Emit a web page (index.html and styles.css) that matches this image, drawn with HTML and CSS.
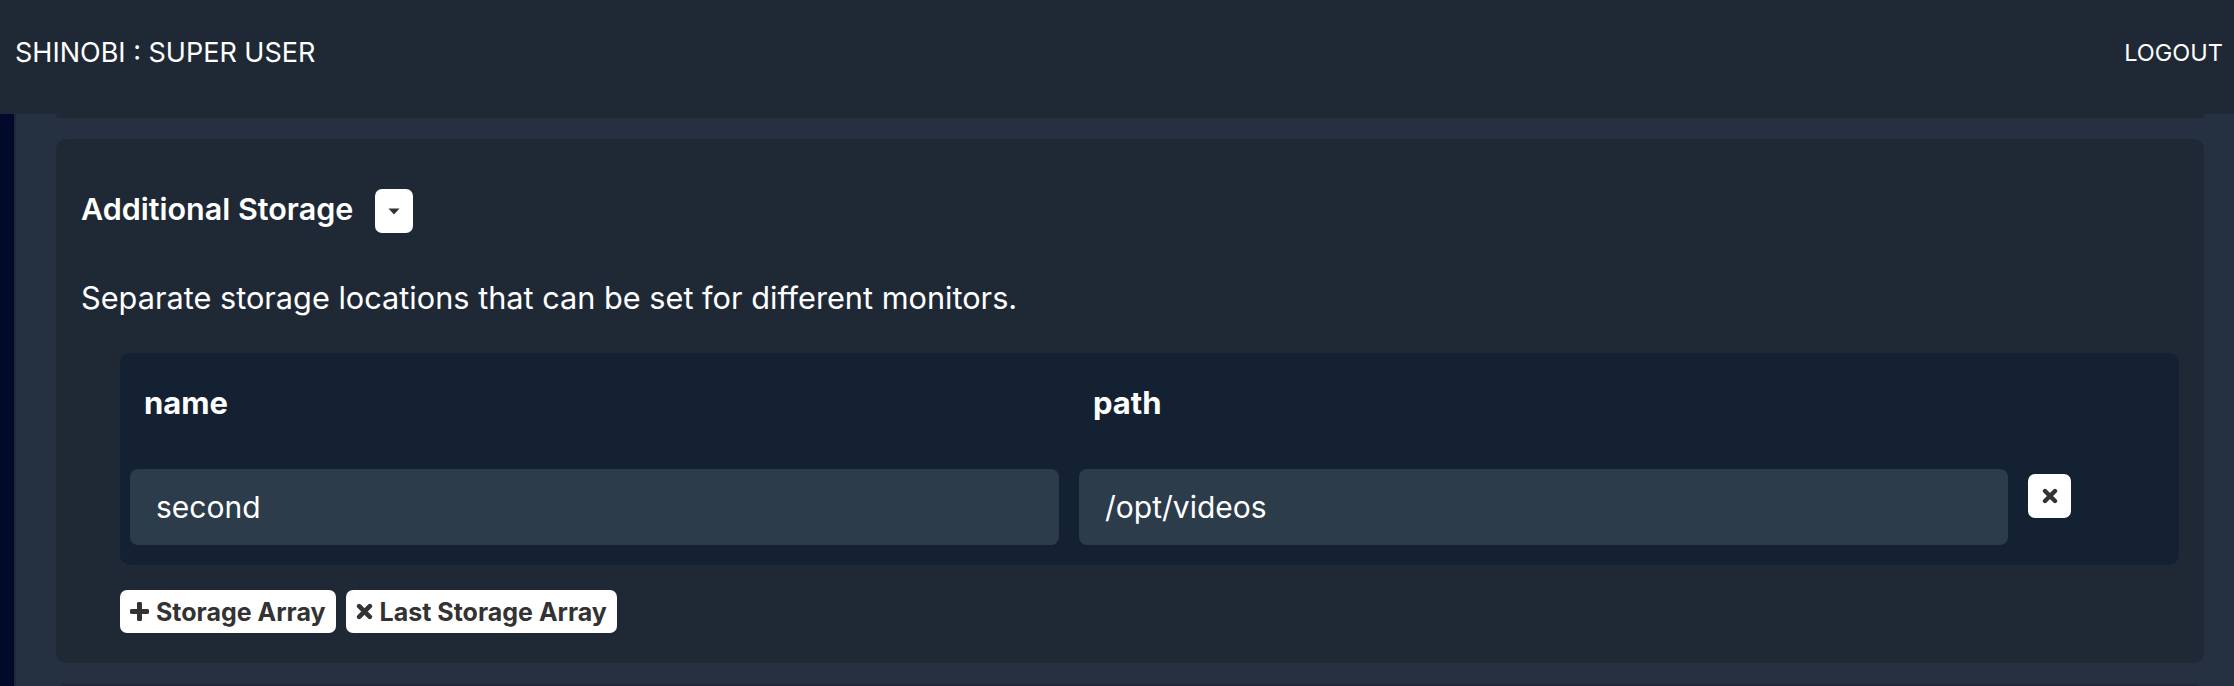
FILE: index.html
```html
<!DOCTYPE html>
<html lang="en">
<head>
<meta charset="utf-8">
<title>Shinobi : Super User</title>
<link rel="stylesheet" href="styles.css">
</head>
<body>
<header class="topbar">
  <div class="brand">SHINOBI : SUPER USER</div>
  <a class="logout" href="#">LOGOUT</a>
</header>
<div class="layout">
  <aside class="rail"></aside>
  <main class="content">
    <div class="card card-prev"></div>
    <section class="card">
      <div class="card-title">
        <h3>Additional Storage</h3>
        <button class="toggle" type="button" aria-label="Collapse">
          <svg width="12" height="7" viewBox="0 0 12 7"><path d="M0.5 0.5 H11.5 L6 6.5 Z" fill="#333"/></svg>
        </button>
      </div>
      <p class="desc">Separate storage locations that can be set for different monitors.</p>
      <div class="storage-table">
        <div class="th">name</div>
        <div class="th">path</div>
        <div class="th"></div>
        <div class="td"><input class="field" type="text" value="second"></div>
        <div class="td"><input class="field" type="text" value="/opt/videos"></div>
        <div class="td td-action">
          <button class="icon-btn" type="button" aria-label="Delete">
            <svg width="16" height="16" viewBox="0 0 16 16"><path d="M3 3 L13 13 M13 3 L3 13" stroke="#333" stroke-width="4.4" stroke-linecap="round"/></svg>
          </button>
        </div>
      </div>
      <div class="actions">
        <button class="btn" type="button">
          <svg width="19" height="19" viewBox="0 0 19 19"><path d="M9.5 2 V17 M2 9.5 H17" stroke="#333" stroke-width="5" stroke-linecap="round"/></svg>
          <span>Storage Array</span>
        </button>
        <button class="btn" type="button">
          <svg width="17" height="17" viewBox="0 0 16 16"><path d="M3 3 L13 13 M13 3 L3 13" stroke="#333" stroke-width="4.4" stroke-linecap="round"/></svg>
          <span>Last Storage Array</span>
        </button>
      </div>
    </section>
    <div class="card card-next"></div>
  </main>
</div>
</body>
</html>
```
FILE: styles.css
```css
html, body {
  margin: 0;
  padding: 0;
  height: 100%;
  overflow: hidden;
}
body {
  background: #253141;
  font-family: Inter, "Noto Sans", "Liberation Sans", sans-serif;
  color: #ffffff;
}
.topbar {
  height: 114px;
  box-sizing: border-box;
  background: #1f2936;
  display: flex;
  justify-content: space-between;
  align-items: flex-start;
  padding: 39px 11px 0 15px;
  line-height: 28px;
}
.brand { color: #fff; font-size: 27px; }
.logout { color: #fff; text-decoration: none; font-size: 23.5px; }
.layout {
  display: flex;
  min-height: 572px;
}
.rail {
  width: 14px;
  background: #020a2c;
  border-right: 2px solid #1f2936;
  flex: none;
}
.content {
  flex: 1;
  padding: 0 30px 0 40px;
}
.card {
  background: #1f2936;
  border-radius: 10px;
}
.card-prev {
  height: 4px;
  border-radius: 0 0 8px 8px;
  margin-bottom: 21px;
}
.card-next {
  height: 20px;
  margin-top: 21px;
  border-radius: 10px 10px 0 0;
}
section.card {
  padding: 50px 25px 30px 25px;
}
.card-title {
  display: flex;
  align-items: center;
  height: 44px;
  gap: 22px;
}
.card-title h3 {
  margin: 0;
  padding-bottom: 5px;
  font-size: 30.5px;
  font-weight: 600;
  line-height: 44px;
}
.toggle {
  width: 38px;
  height: 44px;
  border: 0;
  border-radius: 7px;
  background: #fff;
  padding: 0;
  display: flex;
  align-items: center;
  justify-content: center;
}
.desc {
  margin: 42px 0 0 0;
  font-size: 30.7px;
  line-height: 45px;
}
.storage-table {
  margin: 33px 0 0 39px;
  background: #132132;
  border-radius: 10px;
  display: grid;
  grid-template-columns: 1fr 1fr 161px;
}
.th {
  padding: 27px 24px 34px;
  font-size: 31px;
  font-weight: 700;
  line-height: 45px;
}
.td {
  padding: 10px 10px 20px;
}
.field {
  display: block;
  width: 100%;
  box-sizing: border-box;
  height: 76px;
  border: 0;
  border-radius: 8px;
  background: #2c3c4b;
  color: #fff;
  font-family: Inter, "Noto Sans", "Liberation Sans", sans-serif;
  font-size: 30px;
  padding: 0 26px 0 26px;
  outline: none;
}
.td-action {
  padding-top: 15px;
}
.icon-btn {
  width: 43px;
  height: 44px;
  border: 0;
  border-radius: 7px;
  background: #fff;
  padding: 0;
  display: flex;
  align-items: center;
  justify-content: center;
}
.actions {
  margin: 25px 0 0 39px;
  display: flex;
  gap: 10px;
}
.btn {
  height: 43px;
  border: 0;
  border-radius: 7px;
  background: #fff;
  color: #333;
  display: flex;
  align-items: center;
  gap: 7px;
  padding: 0 10px;
  font-family: Inter, "Noto Sans", "Liberation Sans", sans-serif;
  font-size: 25px;
  font-weight: 700;
}
```
